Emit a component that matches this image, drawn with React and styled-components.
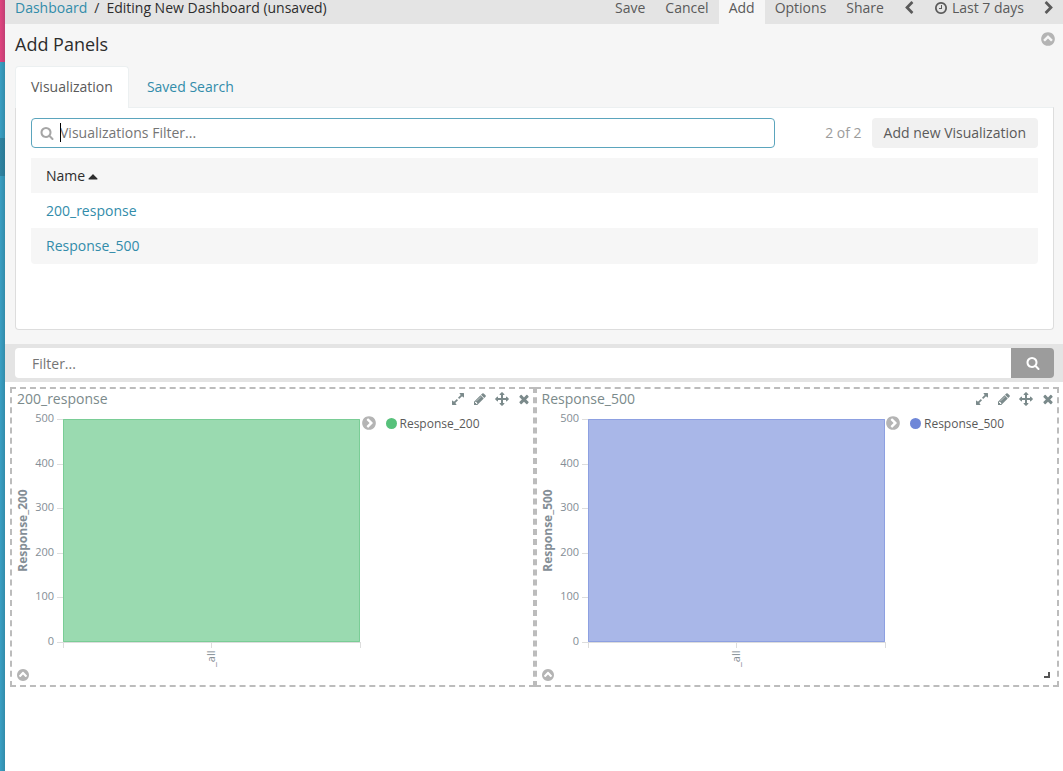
import React, { useLayoutEffect, useRef, useState } from 'react';
import styled, { createGlobalStyle, ThemeProvider } from 'styled-components';

const theme = {
  colors: {
    text: '#2d2d2d',
    nav: '#5a5a5a',
    link: '#328caa',
    bar: '#e4e4e4',
    panel: '#f6f6f6',
    muted: '#9c9c9c',
    icon: '#b4b4b4',
    heading: '#7b8a8b',
    axis: '#848e96',
  },
};

// All icons share the same 1792 unit grid
const circle =
  'q0 209-103 385.5t-279.5 279.5-385.5 103-385.5-103-279.5-279.5-103-385.5 103-385.5 279.5-279.5 385.5-103 385.5 103 279.5 279.5 103 385.5z';

const icons = {
  search:
    'M1216 832q0-185-131.5-316.5t-316.5-131.5-316.5 131.5-131.5 316.5 131.5 316.5 316.5 131.5 316.5-131.5 131.5-316.5zm512 832q0 52-38 90t-90 38q-54 0-90-38l-343-342q-179 124-399 124-143 0-273.5-55.5t-225-150-150-225-55.5-273.5 55.5-273.5 150-225 225-150 273.5-55.5 273.5 55.5 225 150 150 225 55.5 273.5q0 220-124 399l343 343q37 37 37 90z',
  pencil:
    'M491 1536l91-91-235-235-91 91v107h128v128h107zm523-928q0-22-22-22-10 0-17 7l-542 542q-7 7-7 17 0 22 22 22 10 0 17-7l542-542q7-7 7-17zm-54-192l416 416-832 832h-416v-416zm683 96q0 53-37 90l-166 166-416-416 166-165q36-38 90-38 53 0 91 38l235 234q37 39 37 91z',
  move:
    'M1792 896q0 26-19 45l-256 256q-19 19-45 19t-45-19-19-45v-128h-384v384h128q26 0 45 19t19 45-19 45l-256 256q-19 19-45 19t-45-19l-256-256q-19-19-19-45t19-45 45-19h128v-384h-384v128q0 26-19 45t-45 19-45-19l-256-256q-19-19-19-45t19-45l256-256q19-19 45-19t45 19 19 45v128h384v-384h-128q-26 0-45-19t-19-45 19-45l256-256q19-19 45-19t45 19l256 256q19 19 19 45t-19 45-45 19h-128v384h384v-128q0-26 19-45t45-19 45 19l256 256q19 19 19 45z',
  expand:
    'M883 1056q0 13-10 23l-332 332 144 144q19 19 19 45t-19 45-45 19h-448q-26 0-45-19t-19-45v-448q0-26 19-45t45-19 45 19l144 144 332-332q10-10 23-10t23 10l114 114q10 10 10 23zm781-864v448q0 26-19 45t-45 19-45-19l-144-144-332 332q-10 10-23 10t-23-10l-114-114q-10-10-10-23t10-23l332-332-144-144q-19-19-19-45t19-45 45-19h448q26 0 45 19t19 45z',
  close:
    'M1490 1322q0 40-28 68l-136 136q-28 28-68 28t-68-28l-294-294-294 294q-28 28-68 28t-68-28l-136-136q-28-28-28-68t28-68l294-294-294-294q-28-28-28-68t28-68l136-136q28-28 68-28t68 28l294 294 294-294q28-28 68-28t68 28l136 136q28 28 28 68t-28 68l-294 294 294 294q28 28 28 68z',
  clock:
    'M1024 544v448q0 14-9 23t-23 9h-320q-14 0-23-9t-9-23v-64q0-14 9-23t23-9h224v-352q0-14 9-23t23-9h64q14 0 23 9t9 23zm416 352q0-148-73-273t-198-198-273-73-273 73-198 198-73 273 73 273 198 198 273 73 273-73 198-198 73-273zm224 0' +
    circle,
  left:
    'M1427 301l-531 531 531 531q19 19 19 45t-19 45l-166 166q-19 19-45 19t-45-19l-742-742q-19-19-19-45t19-45l742-742q19-19 45-19t45 19l166 166q19 19 19 45t-19 45z',
  right:
    'M1363 877l-742 742q-19 19-45 19t-45-19l-166-166q-19-19-19-45t19-45l531-531-531-531q-19-19-19-45t19-45l166-166q19-19 45-19t45 19l742 742q19 19 19 45t-19 45z',
  circleUp:
    'M1293 1139l102-102q19-19 19-45t-19-45l-454-454q-19-19-45-19t-45 19l-454 454q-19 19-19 45t19 45l102 102q19 19 45 19t45-19l307-307 307 307q19 19 45 19t45-19zm371-243' +
    circle,
  circleRight:
    'M845 1395l454-454q19-19 19-45t-19-45l-454-454q-19-19-45-19t-45 19l-102 102q-19 19-19 45t19 45l307 307-307 307q-19 19-19 45t19 45l102 102q19 19 45 19t45-19zm819-499' +
    circle,
  caretUp:
    'M1408 1216q0 26-19 45t-45 19h-896q-26 0-45-19t-19-45 19-45l448-448q19-19 45-19t45 19l448 448q19 19 19 45z',
};

const Icon = ({ name, size = 14 }) => (
  <IconSvg width={size} height={size} viewBox="0 0 1792 1792" aria-hidden="true">
    <path d={icons[name]} />
  </IconSvg>
);

const navItems = ['Save', 'Cancel', 'Add', 'Options', 'Share'];
const visualizations = ['200_response', 'Response_500'];
const panels = [
  { title: '200_response', series: 'Response_200', color: '#57c17b' },
  { title: 'Response_500', series: 'Response_500', color: '#6f87d8', resizable: true },
];
const ticks = [500, 400, 300, 200, 100, 0];

const plot = { left: 51, top: 10, height: 223 };

const BarChart = ({ series, color }) => {
  const ref = useRef(null);
  const [width, setWidth] = useState(349);

  useLayoutEffect(() => {
    const measure = () => setWidth(Math.round(ref.current.getBoundingClientRect().width));
    measure();
    window.addEventListener('resize', measure);
    return () => window.removeEventListener('resize', measure);
  }, []);

  const barWidth = Math.max(width - plot.left - 1, 0);
  const bottom = plot.top + plot.height;
  const middle = plot.left + Math.floor(barWidth / 2);

  return (
    <ChartArea ref={ref}>
      <ChartSvg width={width} height="256" role="img" aria-label={series}>
        <rect
          x={plot.left + 0.5}
          y={plot.top + 0.5}
          width={Math.max(barWidth - 1, 0)}
          height={plot.height - 1}
          fill={color}
          fillOpacity="0.6"
          stroke={color}
          strokeOpacity="0.7"
        />
        {ticks.map((tick) => {
          const y = bottom - Math.round((tick / 500) * plot.height);
          return (
            <g key={tick}>
              <rect x={plot.left - 6} y={y} width="6" height="1" fill="#ddd" />
              <TickText x={plot.left - 9} y={y + 3} textAnchor="end">{tick}</TickText>
            </g>
          );
        })}
        <rect x={plot.left} y={bottom} width={barWidth} height="1" fill="#ddd" />
        {[plot.left, middle, plot.left + barWidth].map((x) => (
          <rect key={x} x={x} y={bottom} width="1" height="6" fill="#ddd" />
        ))}
        <TickText transform={`translate(${middle + 4} ${bottom + 25}) rotate(-90)`}>_all</TickText>
        <AxisTitle
          transform={`translate(15 ${plot.top + plot.height / 2}) rotate(-90)`}
          textAnchor="middle"
        >
          {series}
        </AxisTitle>
      </ChartSvg>
    </ChartArea>
  );
};

const DashboardPanel = ({ title, series, color, resizable }) => (
  <Panel>
    <PanelHeading>
      <PanelTitle>{title}</PanelTitle>
      <PanelActions>
        <IconButton aria-label="Expand"><Icon name="expand" /></IconButton>
        <IconButton aria-label="Edit"><Icon name="pencil" /></IconButton>
        <IconButton aria-label="Move"><Icon name="move" /></IconButton>
        <IconButton aria-label="Remove"><Icon name="close" /></IconButton>
      </PanelActions>
    </PanelHeading>
    <PanelBody>
      <BarChart series={series} color={color} />
      <Legend>
        <IconButton $muted aria-label="Toggle legend"><Icon name="circleRight" size={16} /></IconButton>
        <LegendItem>
          <LegendDot $color={color} />
          {series}
        </LegendItem>
      </Legend>
    </PanelBody>
    <PanelFooter>
      <IconButton $muted aria-label="Show data"><Icon name="circleUp" /></IconButton>
    </PanelFooter>
    {resizable && <ResizeHandle />}
  </Panel>
);

const App = () => (
  <ThemeProvider theme={theme}>
    <GlobalStyle />
    <Page>
      <Sidebar>
        <SidebarLogo />
        <SidebarLinks />
        <SidebarActive />
      </Sidebar>
      <Main>
        <NavBar>
          <Breadcrumb>
            <Link href="#dashboard">Dashboard</Link>
            <span>/</span>
            <span>Editing New Dashboard (unsaved)</span>
          </Breadcrumb>
          <NavMenu>
            {navItems.map((item) => (
              <NavButton key={item} $active={item === 'Add'}>{item}</NavButton>
            ))}
            <NavButton $compact aria-label="Previous period"><Icon name="left" /></NavButton>
            <NavButton><Icon name="clock" />Last 7 days</NavButton>
            <NavButton $compact aria-label="Next period"><Icon name="right" /></NavButton>
          </NavMenu>
        </NavBar>

        <AddPanels>
          <AddHeader>
            <AddTitle>Add Panels</AddTitle>
            <IconButton $muted aria-label="Collapse"><Icon name="circleUp" size={16} /></IconButton>
          </AddHeader>
          <Tabs>
            <Tab href="#visualization" $active>Visualization</Tab>
            <Tab href="#search">Saved Search</Tab>
          </Tabs>
          <TabContent>
            <Finder>
              <FinderField>
                <Icon name="search" />
                <FinderInput type="text" aria-label="Visualizations Filter" placeholder="Visualizations Filter..." />
                <Caret />
              </FinderField>
              <FinderCount>2 of 2</FinderCount>
              <AddButton>Add new Visualization</AddButton>
            </Finder>
            <Table>
              <thead>
                <Row $shaded>
                  <HeadCell>Name <Icon name="caretUp" size={16} /></HeadCell>
                </Row>
              </thead>
              <tbody>
                {visualizations.map((name, index) => (
                  <Row key={name} $shaded={index % 2 === 1}>
                    <Cell><Link href={`#${name}`}>{name}</Link></Cell>
                  </Row>
                ))}
              </tbody>
            </Table>
          </TabContent>
        </AddPanels>

        <FilterBar>
          <FilterInput type="text" aria-label="Filter" placeholder="Filter..." />
          <FilterButton aria-label="Search"><Icon name="search" /></FilterButton>
        </FilterBar>

        <Grid>
          {panels.map((panel) => (
            <DashboardPanel key={panel.title} {...panel} />
          ))}
        </Grid>
      </Main>
    </Page>
  </ThemeProvider>
);

const GlobalStyle = createGlobalStyle`
  * {
    box-sizing: border-box;
  }

  body {
    margin: 0;
    background: #fff;
    color: ${({ theme }) => theme.colors.text};
    font-family: 'Open Sans', 'Noto Sans', sans-serif;
    font-size: 14px;
    line-height: 20px;
  }

  button,
  input {
    font: inherit;
  }
`;

const IconSvg = styled.svg`
  display: block;
  flex: none;
  fill: currentColor;
`;

const Page = styled.div`
  display: flex;
  min-height: 100vh;
`;

const Sidebar = styled.div`
  display: flex;
  flex-direction: column;
  width: 5px;
  flex: none;
  background: linear-gradient(to right, #3a9fc4, #328caa);
`;

const SidebarLogo = styled.div`
  height: 62px;
  background: linear-gradient(to right, #e0457f, #c13f74);
`;

const SidebarLinks = styled.div`
  height: 76px;
`;

const SidebarActive = styled.div`
  height: 38px;
  background: linear-gradient(to right, #2f83a2, #2a7893);
`;

const Main = styled.main`
  flex: 1;
  min-width: 0;
`;

const NavBar = styled.nav`
  display: flex;
  justify-content: space-between;
  background: ${({ theme }) => theme.colors.bar};
  line-height: 16px;
`;

const Breadcrumb = styled.div`
  display: flex;
  gap: 7px;
  padding: 0 10px 8px;
`;

const Link = styled.a`
  color: ${({ theme }) => theme.colors.link};
  text-decoration: none;
`;

const NavMenu = styled.div`
  display: flex;
  margin-right: -1px;
`;

const NavButton = styled.button`
  display: flex;
  gap: 4px;
  padding: ${({ $compact }) => ($compact ? '0 8px 8px' : '0 10px 8px')};
  border: none;
  background: ${({ $active, theme }) => ($active ? theme.colors.panel : 'none')};
  color: ${({ theme }) => theme.colors.nav};
  line-height: 16px;
  cursor: pointer;

  svg {
    margin-top: 1px;
  }
`;

const AddPanels = styled.section`
  padding: 7px 9px 14px 10px;
  background: ${({ theme }) => theme.colors.panel};
`;

const AddHeader = styled.div`
  display: flex;
  justify-content: space-between;
  margin-right: -2px;
`;

const AddTitle = styled.h2`
  margin: 0 0 9px;
  font-size: 18px;
  font-weight: 400;
  line-height: 26px;
`;

const IconButton = styled.button`
  display: flex;
  align-items: center;
  height: 16px;
  padding: 0;
  border: none;
  background: none;
  color: ${({ $muted, theme }) => ($muted ? theme.colors.icon : theme.colors.heading)};
  cursor: pointer;
`;

const Tabs = styled.div`
  display: flex;
  gap: 2px;
`;

const Tab = styled.a`
  padding: 9px 15px 11px;
  margin-bottom: -1px;
  border: 1px solid ${({ $active }) => ($active ? '#ecf0f1' : 'transparent')};
  border-bottom: none;
  border-radius: 4px 4px 0 0;
  background: ${({ $active }) => ($active ? '#fff' : 'none')};
  color: ${({ $active, theme }) => ($active ? theme.colors.nav : theme.colors.link)};
  line-height: 21px;
  text-decoration: none;
  z-index: 1;
`;

const TabContent = styled.div`
  padding: 10px 15px 65px;
  border: 1px solid #ddd;
  border-top-color: #ecf0f1;
  border-radius: 0 0 4px 4px;
  background: #fff;
`;

const Finder = styled.div`
  display: flex;
  align-items: center;
  margin-bottom: 10px;
`;

const FinderField = styled.label`
  position: relative;
  display: flex;
  align-items: center;
  flex: 1;
  height: 30px;
  padding-left: 8px;
  border: 1px solid #5ba5bd;
  border-radius: 4px;
  color: #a6a6a6;
`;

const FinderInput = styled.input`
  flex: 1;
  min-width: 0;
  padding: 0 6px;
  border: none;
  outline: none;
  background: none;
  color: ${({ theme }) => theme.colors.text};

  &::placeholder {
    color: #757575;
  }
`;

const Caret = styled.span`
  position: absolute;
  top: 4px;
  left: 28px;
  width: 1px;
  height: 19px;
  background: #000;
`;

const FinderCount = styled.span`
  margin: 0 10px 0 50px;
  color: ${({ theme }) => theme.colors.muted};
`;

const AddButton = styled.button`
  height: 30px;
  padding: 0 12px;
  border: none;
  border-radius: 4px;
  background: #f1f1f1;
  color: ${({ theme }) => theme.colors.nav};
  cursor: pointer;
`;

const Table = styled.table`
  width: 100%;
  border-collapse: collapse;
`;

const Row = styled.tr`
  background: ${({ $shaded, theme }) => ($shaded ? theme.colors.panel : '#fff')};
`;

const Cell = styled.td`
  height: 35px;
  padding: 0 15px;

  tr:last-child > & {
    height: 36px;
    border-radius: 0 0 4px 4px;
  }
`;

const HeadCell = styled.th`
  height: 35px;
  padding: 0 15px;
  font-weight: 400;
  text-align: left;

  svg {
    display: inline-block;
    margin-left: -4px;
    vertical-align: -3px;
  }
`;

const FilterBar = styled.form`
  display: flex;
  padding: 4px 9px 4px 10px;
  background: ${({ theme }) => theme.colors.bar};
`;

const FilterInput = styled.input`
  flex: 1;
  min-width: 0;
  height: 30px;
  padding: 0 17px;
  border: none;
  border-radius: 4px 0 0 4px;
  outline: none;
  background: #fff;

  &::placeholder {
    color: #757575;
  }
`;

const FilterButton = styled.button`
  display: flex;
  align-items: center;
  justify-content: center;
  width: 43px;
  padding: 0;
  border: none;
  border-radius: 0 4px 4px 0;
  background: ${({ theme }) => theme.colors.muted};
  color: #fff;
  cursor: pointer;
`;

const Grid = styled.div`
  display: grid;
  grid-template-columns: 1fr 1fr;
  padding: 5px 4px 0 5px;
`;

const Panel = styled.section`
  position: relative;
  min-width: 0;
  border: 2px dashed #bcbcbc;
  color: ${({ theme }) => theme.colors.heading};
`;

const PanelHeading = styled.header`
  display: flex;
  align-items: center;
  justify-content: space-between;
  padding: 0 2px 0 5px;
`;

const PanelTitle = styled.span`
  line-height: 20px;
`;

const PanelActions = styled.div`
  display: flex;
  gap: 8px;
`;

const PanelBody = styled.div`
  display: flex;
`;

const ChartArea = styled.div`
  flex: 1;
  min-width: 0;
`;

const ChartSvg = styled.svg`
  display: block;
  overflow: visible;
`;

const TickText = styled.text`
  fill: ${({ theme }) => theme.colors.axis};
  font-size: 11px;
`;

const AxisTitle = styled.text`
  fill: ${({ theme }) => theme.colors.axis};
  font-size: 12px;
  font-weight: 700;
`;

const Legend = styled.div`
  display: flex;
  align-items: flex-start;
  gap: 9px;
  width: 172px;
  padding-top: 6px;
`;

const LegendItem = styled.div`
  display: flex;
  align-items: center;
  gap: 3px;
  color: ${({ theme }) => theme.colors.nav};
  font-size: 12px;
  line-height: 17px;
`;

const LegendDot = styled.span`
  width: 11px;
  height: 11px;
  border-radius: 50%;
  background: ${({ $color }) => $color};
`;

const PanelFooter = styled.footer`
  display: flex;
  align-items: center;
  height: 20px;
  padding-left: 4px;
`;

const ResizeHandle = styled.span`
  position: absolute;
  right: 7px;
  bottom: 7px;
  width: 6px;
  height: 6px;
  border: solid #555;
  border-width: 0 2px 2px 0;
`;

export default App;
